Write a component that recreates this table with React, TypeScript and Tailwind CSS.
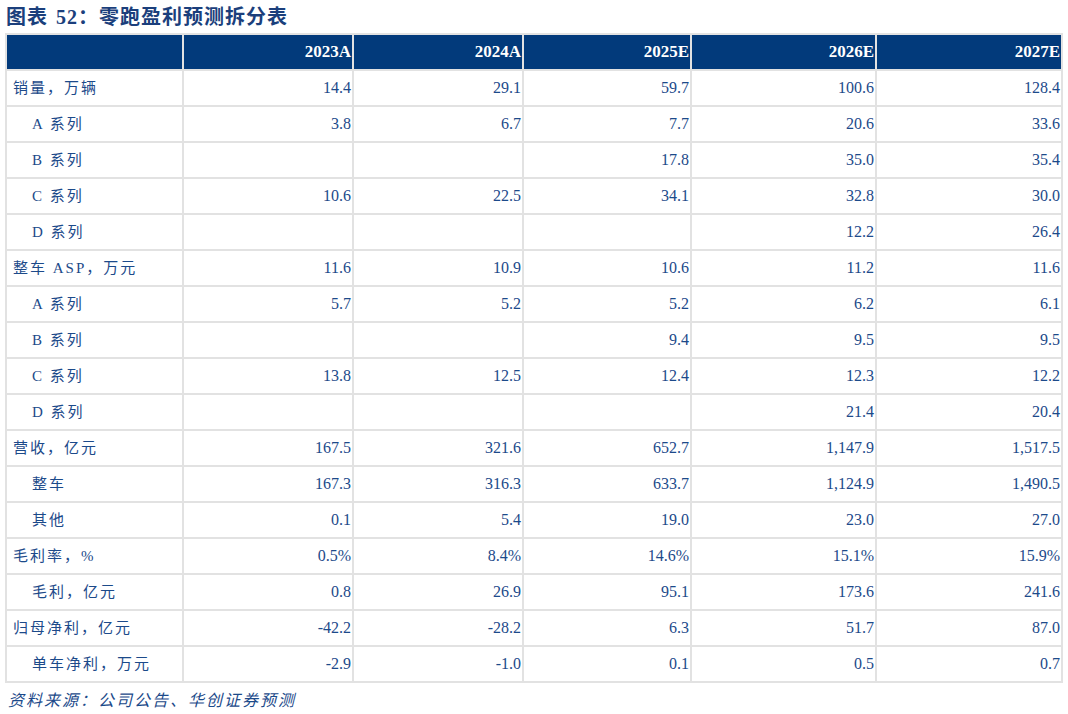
const years = ["2023A", "2024A", "2025E", "2026E", "2027E"];

type Row = { label: string; indent?: boolean; values: string[] };

const rows: Row[] = [
  { label: "销量，万辆", values: ["14.4", "29.1", "59.7", "100.6", "128.4"] },
  { label: "A 系列", indent: true, values: ["3.8", "6.7", "7.7", "20.6", "33.6"] },
  { label: "B 系列", indent: true, values: ["", "", "17.8", "35.0", "35.4"] },
  { label: "C 系列", indent: true, values: ["10.6", "22.5", "34.1", "32.8", "30.0"] },
  { label: "D 系列", indent: true, values: ["", "", "", "12.2", "26.4"] },
  { label: "整车 ASP，万元", values: ["11.6", "10.9", "10.6", "11.2", "11.6"] },
  { label: "A 系列", indent: true, values: ["5.7", "5.2", "5.2", "6.2", "6.1"] },
  { label: "B 系列", indent: true, values: ["", "", "9.4", "9.5", "9.5"] },
  { label: "C 系列", indent: true, values: ["13.8", "12.5", "12.4", "12.3", "12.2"] },
  { label: "D 系列", indent: true, values: ["", "", "", "21.4", "20.4"] },
  { label: "营收，亿元", values: ["167.5", "321.6", "652.7", "1,147.9", "1,517.5"] },
  { label: "整车", indent: true, values: ["167.3", "316.3", "633.7", "1,124.9", "1,490.5"] },
  { label: "其他", indent: true, values: ["0.1", "5.4", "19.0", "23.0", "27.0"] },
  { label: "毛利率，%", values: ["0.5%", "8.4%", "14.6%", "15.1%", "15.9%"] },
  { label: "毛利，亿元", indent: true, values: ["0.8", "26.9", "95.1", "173.6", "241.6"] },
  { label: "归母净利，亿元", values: ["-42.2", "-28.2", "6.3", "51.7", "87.0"] },
  { label: "单车净利，万元", indent: true, values: ["-2.9", "-1.0", "0.1", "0.5", "0.7"] },
];

const colWidths = ["w-[177px]", "w-[170px]", "w-[170px]", "w-[168px]", "w-[185px]", "w-[186px]"];

const font = { fontFamily: '"Liberation Serif", "Noto Sans CJK SC", serif' };

export default function App() {
  return (
    <div className="w-[1068px] h-[714px] bg-white overflow-hidden" style={font}>
      <div className="pl-[6px] pt-[4px] h-[33px] text-[20px] font-bold text-[#1b3f7c] leading-[26px] tracking-[1px]">
        图表<span className="inline-block w-[8px]" />52：零跑盈利预测拆分表
      </div>
      <table className="ml-[5px] border-collapse border-2 border-[#e2e2e2] table-fixed w-[1058px]">
        <colgroup>
          {colWidths.map((w, i) => (
            <col key={i} className={w} />
          ))}
        </colgroup>
        <thead>
          <tr className="h-[36px] bg-[#023a7b]">
            <th className="border-2 border-[#e2e2e2]" />
            {years.map((y) => (
              <th
                key={y}
                className="border-2 border-[#e2e2e2] text-right pr-[1px] text-[17px] font-bold text-white"
              >
                {y}
              </th>
            ))}
          </tr>
        </thead>
        <tbody>
          {rows.map((row, i) => (
            <tr key={i} className="h-[36px]">
              <td
                className={`border-2 border-[#e2e2e2] text-left text-[15px] text-[#1c4a8a] tracking-[2px] ${
                  row.indent ? "pl-[25px]" : "pl-[6px]"
                }`}
              >
                {row.label}
              </td>
              {row.values.map((v, j) => (
                <td
                  key={j}
                  className="border-2 border-[#e2e2e2] text-right pr-[1px] text-[16px] text-[#1c4a8a]"
                >
                  {v}
                </td>
              ))}
            </tr>
          ))}
        </tbody>
      </table>
      <div className="pl-[8px] pt-[6px] text-[16px] italic text-[#1c4a8a] tracking-[2px]">
        资料来源：公司公告、华创证券预测
      </div>
    </div>
  );
}
